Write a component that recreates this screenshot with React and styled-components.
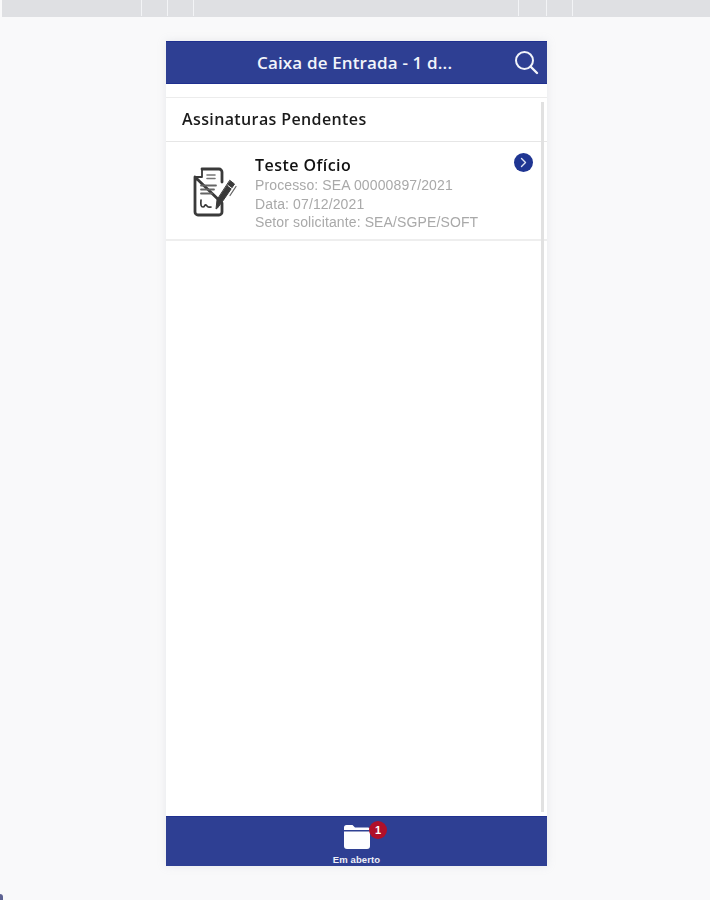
import React from "react";
import styled, { createGlobalStyle } from "styled-components";

const Global = createGlobalStyle`
  html, body { margin: 0; padding: 0; }
  body { background: #f9f9fa; height: 900px; overflow: hidden; position: relative; font-family: "Open Sans", sans-serif; }
`;
const TopStrip = styled.div`
  display: flex; height: 17px; margin-left: 2px; background: #dfe0e3; filter: blur(.4px);
`;
const StripCell = styled.div`
  flex: ${p => p.$w ? `0 0 ${p.$w}px` : "1"};
  box-sizing: border-box;
  height: 16px;
  border-right: ${p => p.$last ? "none" : "1px solid #f3f4f6"};
`;
const Phone = styled.div`
  width: 381px; height: 825px; margin: 24px 0 0 166px;
  display: flex; flex-direction: column; background: #fff;
  box-shadow: 0 0 8px rgba(180,185,195,.25);
  position: relative;
  filter: blur(.4px);
`;
const Header = styled.header`
  flex: 0 0 43px; background: #2e3f93; border-top: 1px solid #1f3090; border-bottom: 1px solid #1f3090; box-sizing: border-box;
  display: flex; align-items: center; position: relative; padding-left: 91px; padding-bottom: 1px;
`;
const Title = styled.h1`
  margin: 0; color: #f2f4fa; font: 600 17px "Open Sans", sans-serif; letter-spacing: .15px; white-space: nowrap;
`;
const SearchBtn = styled.span`
  position: absolute; right: 8px; top: 8px; width: 25px; height: 25px; display: block;
`;
const Content = styled.div`
  flex: 1; padding-top: 13px; display: flex; flex-direction: column; position: relative;
`;
const Scrollbar = styled.div`
  position: absolute; right: 3px; top: 18px; bottom: 4px; width: 3px; background: #e1e1e1;
`;
const SectionHead = styled.div`
  height: 42px; border-top: 1px solid #ececec; border-bottom: 1px solid #e6e6e6;
  display: flex; align-items: center; padding: 0 0 1px 16px; box-sizing: content-box;
  font: 600 16px "Open Sans", sans-serif; letter-spacing: .38px; color: #1b1b1b;
`;
const Item = styled.div`
  height: 97px; border-bottom: 2px solid #eeeeee; display: flex; position: relative;
`;
const IconCell = styled.div`
  flex: 0 0 89px; display: flex; justify-content: center; padding: 25px 0 0 8px; box-sizing: border-box;
`;
const ItemText = styled.div`
  padding-top: 13px; display: flex; flex-direction: column;
`;
const ItemTitle = styled.div`
  font: 600 16px/21px "Open Sans", sans-serif; color: #111; letter-spacing: .45px;
`;
const ItemLine = styled.div`
  font: 14px/18.5px "Liberation Sans", sans-serif; color: #a9a9a9; letter-spacing: .12px;
`;
const Arrow = styled.span`
  position: absolute; right: 14px; top: 11px; width: 19px; height: 19px; border-radius: 50%;
  background: #1f3592; display: flex; align-items: center; justify-content: center;
`;
const Footer = styled.footer`
  flex: 0 0 50px; background: #2e3f93; border-top: 1px solid #1f3090; box-sizing: border-box;
  display: flex; flex-direction: column; align-items: center; padding: 7px 0 0 0;
`;
const FolderWrap = styled.div`
  position: relative; width: 28px; height: 26px; margin-left: 1px;
`;
const Badge = styled.span`
  position: absolute; left: 26px; top: -3px; width: 18px; height: 18px; border-radius: 50%;
  background: #b0102a; color: #fff; font: 700 11px/18px "Liberation Sans", sans-serif; text-align: center;
`;
const FooterLabel = styled.span`
  font: 700 9.5px/10px "Liberation Sans", sans-serif; letter-spacing: .1px; color: #eef0f8; margin-top: 5px;
`;
const Corner = styled.span`
  position: absolute; left: 0; bottom: 0; width: 3px; height: 6px; background: #2a3070; opacity: .75;
  border-top-right-radius: 3px; filter: blur(.5px);
`;

const DocIcon = () => (
  <svg width="44" height="50" viewBox="0 0 44 50" fill="none" stroke="#3a3a3a" strokeLinecap="round" strokeLinejoin="round">
    <path d="M9 2H26a3 3 0 0 1 3 3V15M29 36V45a3 3 0 0 1-3 3H5a3 3 0 0 1-3-3V10Z" strokeWidth="2.800" />
    <path d="M9 2.500V10H2.500" strokeWidth="1.800" />
    <path d="M14 8h8M14 11.500h8" strokeWidth="1.600" stroke="#777" />
    <path d="M8 18.500h15M8 22.500h13M8 26.500h11" strokeWidth="1.800" stroke="#666" />
    <path d="M8 33c-.5 5 0 7 2 7s1.500-3 3-2 1.500 3 5 2" strokeWidth="1.700" />
    <path d="M37 13.500l4.500 3.500-11 16-6 8-1.500 1 1-9z" fill="#3a3a3a" stroke="#3a3a3a" strokeWidth="1" />
    <path d="M35 18.500l4.500 3.500" stroke="#fff" strokeWidth="1" />
    <path d="M43 19.500l-6 9" strokeWidth="1.300" stroke="#666" />
  </svg>
);

export default function App() {
  return (
    <>
      <Global />
      <TopStrip>
        {[140, 26, 26, 325, 28, 26].map((w, i) => <StripCell key={i} $w={w} />)}
        <StripCell $last />
      </TopStrip>
      <Phone>
        <Header>
          <Title>Caixa de Entrada - 1 d...</Title>
          <SearchBtn>
            <svg width="25" height="25" viewBox="0 0 25 25" fill="none" stroke="#f2f4fa" strokeWidth="2" strokeLinecap="round">
              <circle cx="10.500" cy="10.500" r="8.500" />
              <path d="M16.500 16.500l6.500 6.500" strokeWidth="2.400" />
            </svg>
          </SearchBtn>
        </Header>
        <Content>
          <SectionHead>Assinaturas Pendentes</SectionHead>
          <Item>
            <IconCell><DocIcon /></IconCell>
            <ItemText>
              <ItemTitle>Teste Ofício</ItemTitle>
              <ItemLine>Processo: SEA 00000897/2021</ItemLine>
              <ItemLine>Data: 07/12/2021</ItemLine>
              <ItemLine>Setor solicitante: SEA/SGPE/SOFT</ItemLine>
            </ItemText>
            <Arrow>
              <svg width="9" height="11" viewBox="0 0 9 11" fill="none" stroke="#dfe4f5" strokeWidth="1.400" strokeLinecap="round" strokeLinejoin="round">
                <path d="M2.500 1.500l4 4-4 4" />
              </svg>
            </Arrow>
          </Item>
          <Scrollbar />
        </Content>
        <Footer>
          <FolderWrap>
            <svg width="28" height="26" viewBox="0 0 28 26" fill="#fdfdff">
              <path d="M1 3.500A2.500 2.500 0 0 1 3.500 1h6l2.500 2.500h13A2 2 0 0 1 27 5.500v.5H1z" />
              <path d="M1 7.500h26V22a3 3 0 0 1-3 3H4a3 3 0 0 1-3-3z" />
            </svg>
            <Badge>1</Badge>
          </FolderWrap>
          <FooterLabel>Em aberto</FooterLabel>
        </Footer>
      </Phone>
      <Corner />
    </>
  );
}
